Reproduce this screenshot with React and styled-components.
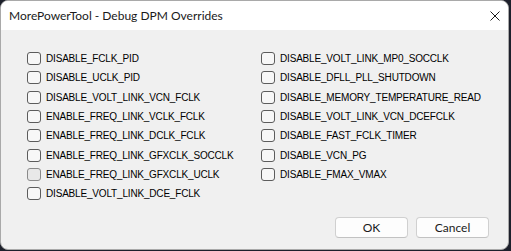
import React from 'react';
import styled, { createGlobalStyle } from 'styled-components';

const Global = createGlobalStyle`
  html, body {
    margin: 0;
    padding: 0;
    background: #1d202b;
  }
  body {
    width: 511px;
    height: 251px;
    overflow: hidden;
    background: linear-gradient(to right, #c9c9c9 0 78px, #1d202b 78px);
  }
`;

const Desk = styled.div`
  width: 511px;
  height: 251px;
  background: #1d202b;
`;

const Window = styled.div`
  width: 509px;
  height: 250px;
  box-sizing: border-box;
  border: 1px solid #a9a9a9;
  border-radius: 8px;
  overflow: hidden;
  display: flex;
  flex-direction: column;
  background: #f0f0f0;
`;

const TitleBar = styled.div`
  height: 29px;
  flex: none;
  background: #ffffff;
  display: flex;
  align-items: center;
  justify-content: space-between;
  padding: 0 8px 0 8px;
  font-family: Lato, "Noto Sans", sans-serif;
  font-size: 12px;
  color: #1a1a1a;
`;

const Close = styled.div`
  width: 10px;
  height: 10px;
  display: flex;
`;

const Body = styled.div`
  flex: 1;
  display: flex;
  flex-direction: column;
  padding: 19px 19px 11px 26px;
`;

const Grid = styled.div`
  display: grid;
  grid-template-columns: 234px 1fr;
  grid-auto-flow: column;
  grid-template-rows: repeat(8, 19.33px);
`;

const Row = styled.label`
  display: flex;
  align-items: center;
  gap: 5px;
  font-family: "Liberation Sans", Arial, sans-serif;
  font-size: 10px;
  letter-spacing: -0.18px;
  color: #000;
`;

const Box = styled.span`
  width: 12px;
  height: 11px;
  border: 1px solid ${p => (p.$hover ? '#8a8a8a' : '#5c5c5c')};
  border-radius: 3px;
  background: ${p => (p.$hover ? '#e8e8e8' : '#f7f7f7')};
  flex: none;
`;

const Buttons = styled.div`
  margin-top: auto;
  display: flex;
  justify-content: flex-end;
  gap: 8px;
`;

const Button = styled.button`
  width: 73px;
  height: 21px;
  box-sizing: border-box;
  background: #fdfdfd;
  border: 1px solid #d0d0d0;
  border-bottom-color: #c2c2c2;
  border-radius: 4px;
  font-family: Lato, "Noto Sans", sans-serif;
  font-size: 12px;
  color: #1a1a1a;
  padding: 0;
`;

const left = [
  'DISABLE_FCLK_PID',
  'DISABLE_UCLK_PID',
  'DISABLE_VOLT_LINK_VCN_FCLK',
  'ENABLE_FREQ_LINK_VCLK_FCLK',
  'ENABLE_FREQ_LINK_DCLK_FCLK',
  'ENABLE_FREQ_LINK_GFXCLK_SOCCLK',
  'ENABLE_FREQ_LINK_GFXCLK_UCLK',
  'DISABLE_VOLT_LINK_DCE_FCLK',
];

const right = [
  'DISABLE_VOLT_LINK_MP0_SOCCLK',
  'DISABLE_DFLL_PLL_SHUTDOWN',
  'DISABLE_MEMORY_TEMPERATURE_READ',
  'DISABLE_VOLT_LINK_VCN_DCEFCLK',
  'DISABLE_FAST_FCLK_TIMER',
  'DISABLE_VCN_PG',
  'DISABLE_FMAX_VMAX',
];

export default function App() {
  return (
    <Desk>
      <Global />
      <Window>
        <TitleBar>
          <span>MorePowerTool - Debug DPM Overrides</span>
          <Close>
            <svg width="10" height="10" viewBox="0 0 10 10">
              <path d="M0.5 0.5 L9.5 9.5 M9.5 0.5 L0.5 9.5" stroke="#1a1a1a" strokeWidth="1" />
            </svg>
          </Close>
        </TitleBar>
        <Body>
          <Grid>
            {left.map(t => (
              <Row key={t}>
                <Box $hover={t === 'ENABLE_FREQ_LINK_GFXCLK_UCLK'} />
                {t}
              </Row>
            ))}
            {right.map(t => (
              <Row key={t}>
                <Box />
                {t}
              </Row>
            ))}
          </Grid>
          <Buttons>
            <Button>OK</Button>
            <Button>Cancel</Button>
          </Buttons>
        </Body>
      </Window>
    </Desk>
  );
}
